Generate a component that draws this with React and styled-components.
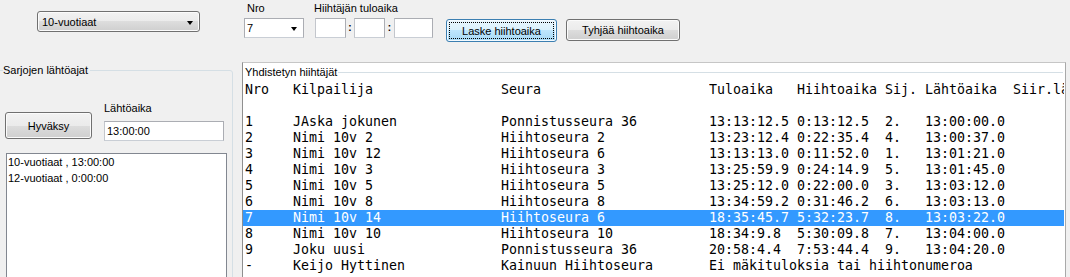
import React from "react";
import styled, { createGlobalStyle } from "styled-components";

const Global = createGlobalStyle`
  html, body { margin: 0; padding: 0; background: #f0f0f0; }
  body { font-family: "Liberation Sans", Arial, sans-serif; font-size: 11px; color: #000; }
`;

const Root = styled.div`
  width: 1070px;
  height: 277px;
  overflow: hidden;
  background: #f0f0f0;
  font-family: "Liberation Sans", Arial, sans-serif;
  font-size: 11px;
`;

const TopBar = styled.div`
  display: flex;
  align-items: flex-start;
  height: 62px;
`;

const winButtonBg = `linear-gradient(#f2f2f2 0%, #ebebeb 50%, #dddddd 50%, #cfcfcf 100%)`;

const ComboButton = styled.div`
  box-sizing: border-box;
  margin: 11px 0 0 37px;
  width: 163px;
  height: 21px;
  border: 1px solid #707070;
  border-radius: 3px;
  background: ${winButtonBg};
  box-shadow: inset 0 0 0 1px #fbfbfb;
  display: flex;
  align-items: center;
  justify-content: space-between;
  padding: 0 6px 0 4px;
`;

const Arrow = styled.span`
  width: 0;
  height: 0;
  border-left: 3.5px solid transparent;
  border-right: 3.5px solid transparent;
  border-top: 4px solid #000;
  margin-top: 2px;
`;

const Field = styled.div`
  display: flex;
  flex-direction: column;
  margin-left: ${(p) => p.$ml}px;
`;

const Label = styled.div`
  line-height: 13px;
  height: 13px;
  margin-top: ${(p) => p.$mt ?? 2}px;
  padding-left: ${(p) => p.$pl ?? 0}px;
  white-space: nowrap;
`;

const EditCombo = styled.div`
  box-sizing: border-box;
  margin-top: 3px;
  width: 60px;
  height: 20px;
  background: #fff;
  border: 1px solid #abadb3;
  border-bottom-color: #c9ced5;
  display: flex;
  align-items: center;
  justify-content: space-between;
  padding: 0 6px 0 2px;
`;

const TimeRow = styled.div`
  display: flex;
  align-items: center;
  margin-top: 3px;
  margin-left: 1px;
`;

const TextBox = styled.div`
  box-sizing: border-box;
  width: ${(p) => p.$w}px;
  height: 20px;
  margin-top: ${(p) => p.$mt ?? 0}px;
  background: #fff;
  border: 1px solid #abadb3;
  border-bottom-color: #c9ced5;
  border-left-color: #c3c6cc;
  display: flex;
  align-items: center;
  padding-left: 2px;
`;

const Sep = styled.span`
  width: ${(p) => p.$w}px;
  text-align: center;
  font-weight: bold;
  font-size: 10px;
  line-height: 20px;
`;

const Button = styled.div`
  box-sizing: border-box;
  margin: ${(p) => p.$m};
  width: ${(p) => p.$w}px;
  height: ${(p) => p.$h}px;
  border: 1px solid ${(p) => (p.$focus ? "#3c7fb1" : "#707070")};
  border-radius: 3px;
  background: ${(p) =>
    p.$focus
      ? "linear-gradient(#eaf6fd 0%, #d9f0fc 50%, #bee6fd 50%, #a7d9f5 100%)"
      : winButtonBg};
  box-shadow: inset 0 0 0 1px ${(p) => (p.$focus ? "#f3faff" : "#fbfbfb")};
  display: flex;
  align-items: center;
  justify-content: center;
  position: relative;
  white-space: nowrap;
  ${(p) =>
    p.$focus &&
    `
    &::after {
      content: "";
      position: absolute;
      inset: 2px;
      border: 1px dotted #000;
    }
  `}
`;

const Main = styled.div`
  display: flex;
  align-items: flex-start;
`;

const GroupBox = styled.fieldset`
  box-sizing: border-box;
  margin: 1px 0 0 -5px;
  width: 238px;
  height: 230px;
  padding: 0;
  border: 1px solid #d5dfe5;
  border-radius: 3px;
  min-width: 0;
`;

const Legend = styled.legend`
  padding: 0 2px 0 0;
  margin-left: 7px;
  line-height: 14px;
  height: 14px;
`;

const GroupInner = styled.div`
  padding-left: 9px;
  display: flex;
  flex-direction: column;
`;

const ControlsRow = styled.div`
  display: flex;
  align-items: flex-start;
  margin-top: 25px;
`;

const ListBox = styled.div`
  box-sizing: border-box;
  margin: 12px 0 0 1px;
  width: 221px;
  height: 140px;
  background: #fff;
  border: 1px solid #828790;
  padding: 0 1px;
`;

const ListItem = styled.div`
  line-height: 16px;
  height: 16px;
  white-space: nowrap;
`;

const ResultPanel = styled.div`
  box-sizing: border-box;
  margin-left: 9px;
  width: 824px;
  height: 220px;
  background: #fff;
  border: 1px solid #a9a9a9;
  border-top-color: #c6c6c6;
  border-left-color: #8f8f8f;
  overflow: hidden;
`;

const TitleRow = styled.div`
  display: flex;
  align-items: center;
  height: 19px;
  padding-left: 2px;
  padding-right: 2px;
`;

const TitleText = styled.span`
  line-height: 13px;
  white-space: nowrap;
  padding-right: 1px;
`;

const TitleLine = styled.span`
  flex: 1;
  height: 0;
  border-top: 1px solid #d5dfe5;
`;

const Rows = styled.div`
  padding-right: 1px;
`;

const Row = styled.div`
  display: grid;
  grid-template-columns: 48px 208px 208px 88px 88px 40px 88px 1fr;
  height: 16px;
  line-height: 16px;
  padding-left: 2px;
  font-family: "DejaVu Sans Mono", "Liberation Mono", monospace;
  font-size: 13.29px;
  white-space: pre;
  overflow: hidden;
  background: ${(p) => (p.$selected ? "#3399ff" : "transparent")};
  color: ${(p) => (p.$selected ? "#fff" : "#000")};
`;

const Cell = styled.span`
  overflow: hidden;
  grid-column: ${(p) => (p.$span ? `span ${p.$span}` : "auto")};
`;

const header = ["Nro", "Kilpailija", "Seura", "Tuloaika", "Hiihtoaika", "Sij.", "Lähtöaika", "Siir.lä"];

const data = [
  ["1", "JAska jokunen", "Ponnistusseura 36", "13:13:12.5", "0:13:12.5", "2.", "13:00:00.0"],
  ["2", "Nimi 10v 2", "Hiihtoseura 2", "13:23:12.4", "0:22:35.4", "4.", "13:00:37.0"],
  ["3", "Nimi 10v 12", "Hiihtoseura 6", "13:13:13.0", "0:11:52.0", "1.", "13:01:21.0"],
  ["4", "Nimi 10v 3", "Hiihtoseura 3", "13:25:59.9", "0:24:14.9", "5.", "13:01:45.0"],
  ["5", "Nimi 10v 5", "Hiihtoseura 5", "13:25:12.0", "0:22:00.0", "3.", "13:03:12.0"],
  ["6", "Nimi 10v 8", "Hiihtoseura 8", "13:34:59.2", "0:31:46.2", "6.", "13:03:13.0"],
  ["7", "Nimi 10v 14", "Hiihtoseura 6", "18:35:45.7", "5:32:23.7", "8.", "13:03:22.0"],
  ["8", "Nimi 10v 10", "Hiihtoseura 10", "18:34:9.8", "5:30:09.8", "7.", "13:04:00.0"],
  ["9", "Joku uusi", "Ponnistusseura 36", "20:58:4.4", "7:53:44.4", "9.", "13:04:20.0"],
];

export default function App() {
  return (
    <Root>
      <Global />
      <TopBar>
        <ComboButton>
          <span>10-vuotiaat</span>
          <Arrow />
        </ComboButton>
        <Field $ml={44}>
          <Label $pl={3}>Nro</Label>
          <EditCombo>
            <span>7</span>
            <Arrow />
          </EditCombo>
        </Field>
        <Field $ml={10}>
          <Label>Hiihtäjän tuloaika</Label>
          <TimeRow>
            <TextBox $w={31} />
            <Sep $w={8}>:</Sep>
            <TextBox $w={31} />
            <Sep $w={9}>:</Sep>
            <TextBox $w={39} />
          </TimeRow>
        </Field>
        <Button $focus $m="19px 0 0 13px" $w={111} $h={23}>
          Laske hiihtoaika
        </Button>
        <Button $m="19px 0 0 9px" $w={114} $h={22}>
          Tyhjää hiihtoaika
        </Button>
      </TopBar>
      <Main>
        <GroupBox>
          <Legend>Sarjojen lähtöajat</Legend>
          <GroupInner>
            <ControlsRow>
              <Button $m="10px 0 0 0" $w={87} $h={27}>
                Hyväksy
              </Button>
              <Field $ml={12}>
                <Label $mt={0}>Lähtöaika</Label>
                <TextBox $w={120} $mt={6}>13:00:00</TextBox>
              </Field>
            </ControlsRow>
            <ListBox>
              <ListItem>10-vuotiaat , 13:00:00</ListItem>
              <ListItem>12-vuotiaat , 0:00:00</ListItem>
            </ListBox>
          </GroupInner>
        </GroupBox>
        <ResultPanel>
          <TitleRow>
            <TitleText>Yhdistetyn hiihtäjät</TitleText>
            <TitleLine />
          </TitleRow>
          <Rows>
            <Row>
              {header.map((h, i) => (
                <Cell key={i}>{h}</Cell>
              ))}
            </Row>
            <Row />
            {data.map((r) => (
              <Row key={r[0]} $selected={r[0] === "7"}>
                {r.map((c, i) => (
                  <Cell key={i}>{c}</Cell>
                ))}
              </Row>
            ))}
            <Row>
              <Cell>-</Cell>
              <Cell>Keijo Hyttinen</Cell>
              <Cell>Kainuun Hiihtoseura</Cell>
              <Cell $span={5}>Ei mäkituloksia tai hiihtonumeroa</Cell>
            </Row>
          </Rows>
        </ResultPanel>
      </Main>
    </Root>
  );
}
